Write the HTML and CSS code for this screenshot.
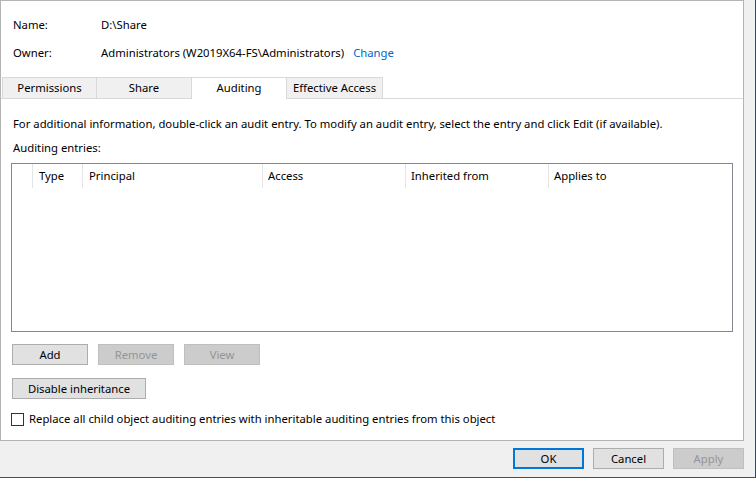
FILE: index.html
```html
<!DOCTYPE html>
<html>
<head>
<meta charset="utf-8">
<link rel="stylesheet" href="styles.css">
</head>
<body>
<div class="window">
  <div class="panel">
    <div class="header">
      <div class="hlabel">Name:</div>
      <div class="hvalue">D:\Share</div>
      <div class="hlabel">Owner:</div>
      <div class="hvalue">Administrators (W2019X64-FS\Administrators)<span class="link">Change</span></div>
    </div>
    <div class="tabs">
      <div class="tab first">Permissions</div>
      <div class="tab">Share</div>
      <div class="tab selected">Auditing</div>
      <div class="tab wide">Effective Access</div>
    </div>
    <div class="pane">
      <div class="info">For additional information, double-click an audit entry. To modify an audit entry, select the entry and click Edit (if available).</div>
      <div class="info second">Auditing entries:</div>
      <div class="list">
        <div class="lhead">
          <div class="col c0"></div>
          <div class="col c1">Type</div>
          <div class="col c2">Principal</div>
          <div class="col c3">Access</div>
          <div class="col c4">Inherited from</div>
          <div class="col c5">Applies to</div>
        </div>
      </div>
      <div class="btnrow">
        <div class="btn">Add</div>
        <div class="btn disabled">Remove</div>
        <div class="btn disabled">View</div>
      </div>
      <div class="btnrow second">
        <div class="btn long">Disable inheritance</div>
      </div>
      <div class="check">
        <span class="box"></span>
        <span>Replace all child object auditing entries with inheritable auditing entries from this object</span>
      </div>
    </div>
  </div>
  <div class="footer">
    <div class="btn foot default">OK</div>
    <div class="btn foot">Cancel</div>
    <div class="btn foot disabled">Apply</div>
  </div>
</div>
</body>
</html>
```

FILE: styles.css
```css
html, body {
  margin: 0;
  padding: 0;
  background: #f0f0f0;
}
body {
  font-family: "Noto Sans", "Open Sans", sans-serif;
  font-size: 11.3px;
  color: #000;
}
.window {
  width: 756px;
  height: 478px;
  box-sizing: border-box;
  border-right: 1px solid #34495e;
  border-bottom: 1px solid #4a4f56;
  padding-right: 11px;
  background: #f0f0f0;
}
.panel {
  width: 744px;
  height: 441px;
  box-sizing: border-box;
  border: 1px solid #b4b4b4;
  background: #fff;
  display: flex;
  flex-direction: column;
}
.header {
  display: grid;
  grid-template-columns: 88px auto;
  row-gap: 12px;
  padding: 16px 0 16px 12px;
  line-height: 16px;
}
.link {
  color: #0066cc;
  margin-left: 9px;
}
.tabs {
  display: flex;
  align-items: flex-end;
  height: 21px;
  padding-left: 1px;
}
.tab {
  width: 95px;
  height: 21px;
  box-sizing: border-box;
  background: #f0f0f0;
  border-top: 1px solid #d9d9d9;
  border-right: 1px solid #d9d9d9;
  text-align: center;
  line-height: 19px;
}
.tab.first {
  border-left: 1px solid #d9d9d9;
}
.tab.wide {
  width: 96px;
}
.tab.selected {
  background: #fff;
  height: 22px;
  margin-bottom: -1px;
  position: relative;
  line-height: 19px;
  padding-bottom: 1px;
}
.pane {
  flex: 1;
  border-top: 1px solid #d9d9d9;
  padding: 17px 10px 0 10px;
}
.info {
  line-height: 16px;
  padding-left: 2px;
}
.info.second {
  margin-top: 8px;
}
.list {
  margin-top: 7px;
  height: 169px;
  box-sizing: border-box;
  border: 1px solid #828790;
  background: #fff;
}
.lhead {
  display: flex;
  height: 24px;
}
.col {
  box-sizing: border-box;
  border-right: 1px solid #e5e5e5;
  line-height: 24px;
  padding-left: 5px;
  white-space: nowrap;
}
.c0 { width: 21px; }
.c1 { width: 50px; padding-left: 6px; }
.c2 { width: 180px; padding-left: 6px; }
.c3 { width: 143px; }
.c4 { width: 143px; }
.c5 { width: 143px; border-right: none; }
.btnrow {
  display: flex;
  gap: 10px;
  margin-top: 12px;
  padding-left: 1px;
}
.btnrow.second {
  margin-top: 13px;
}
.btn {
  width: 76px;
  height: 21px;
  box-sizing: border-box;
  background: #e1e1e1;
  border: 1px solid #adadad;
  text-align: center;
  line-height: 19px;
}
.btn.long {
  width: 134px;
}
.btn.disabled {
  background: #cccccc;
  border-color: #bfbfbf;
  color: #959595;
}
.check {
  display: flex;
  align-items: center;
  gap: 5px;
  margin-top: 12px;
  line-height: 16px;
}
.box {
  width: 13px;
  height: 13px;
  box-sizing: border-box;
  border: 1px solid #333;
  background: #fff;
}
.footer {
  display: flex;
  justify-content: flex-end;
  gap: 9px;
  margin-top: 7px;
  width: 744px;
}
.btn.foot {
  width: 71px;
  height: 21px;
}
.btn.default {
  border: 2px solid #0078d7;
  line-height: 17px;
}
```
